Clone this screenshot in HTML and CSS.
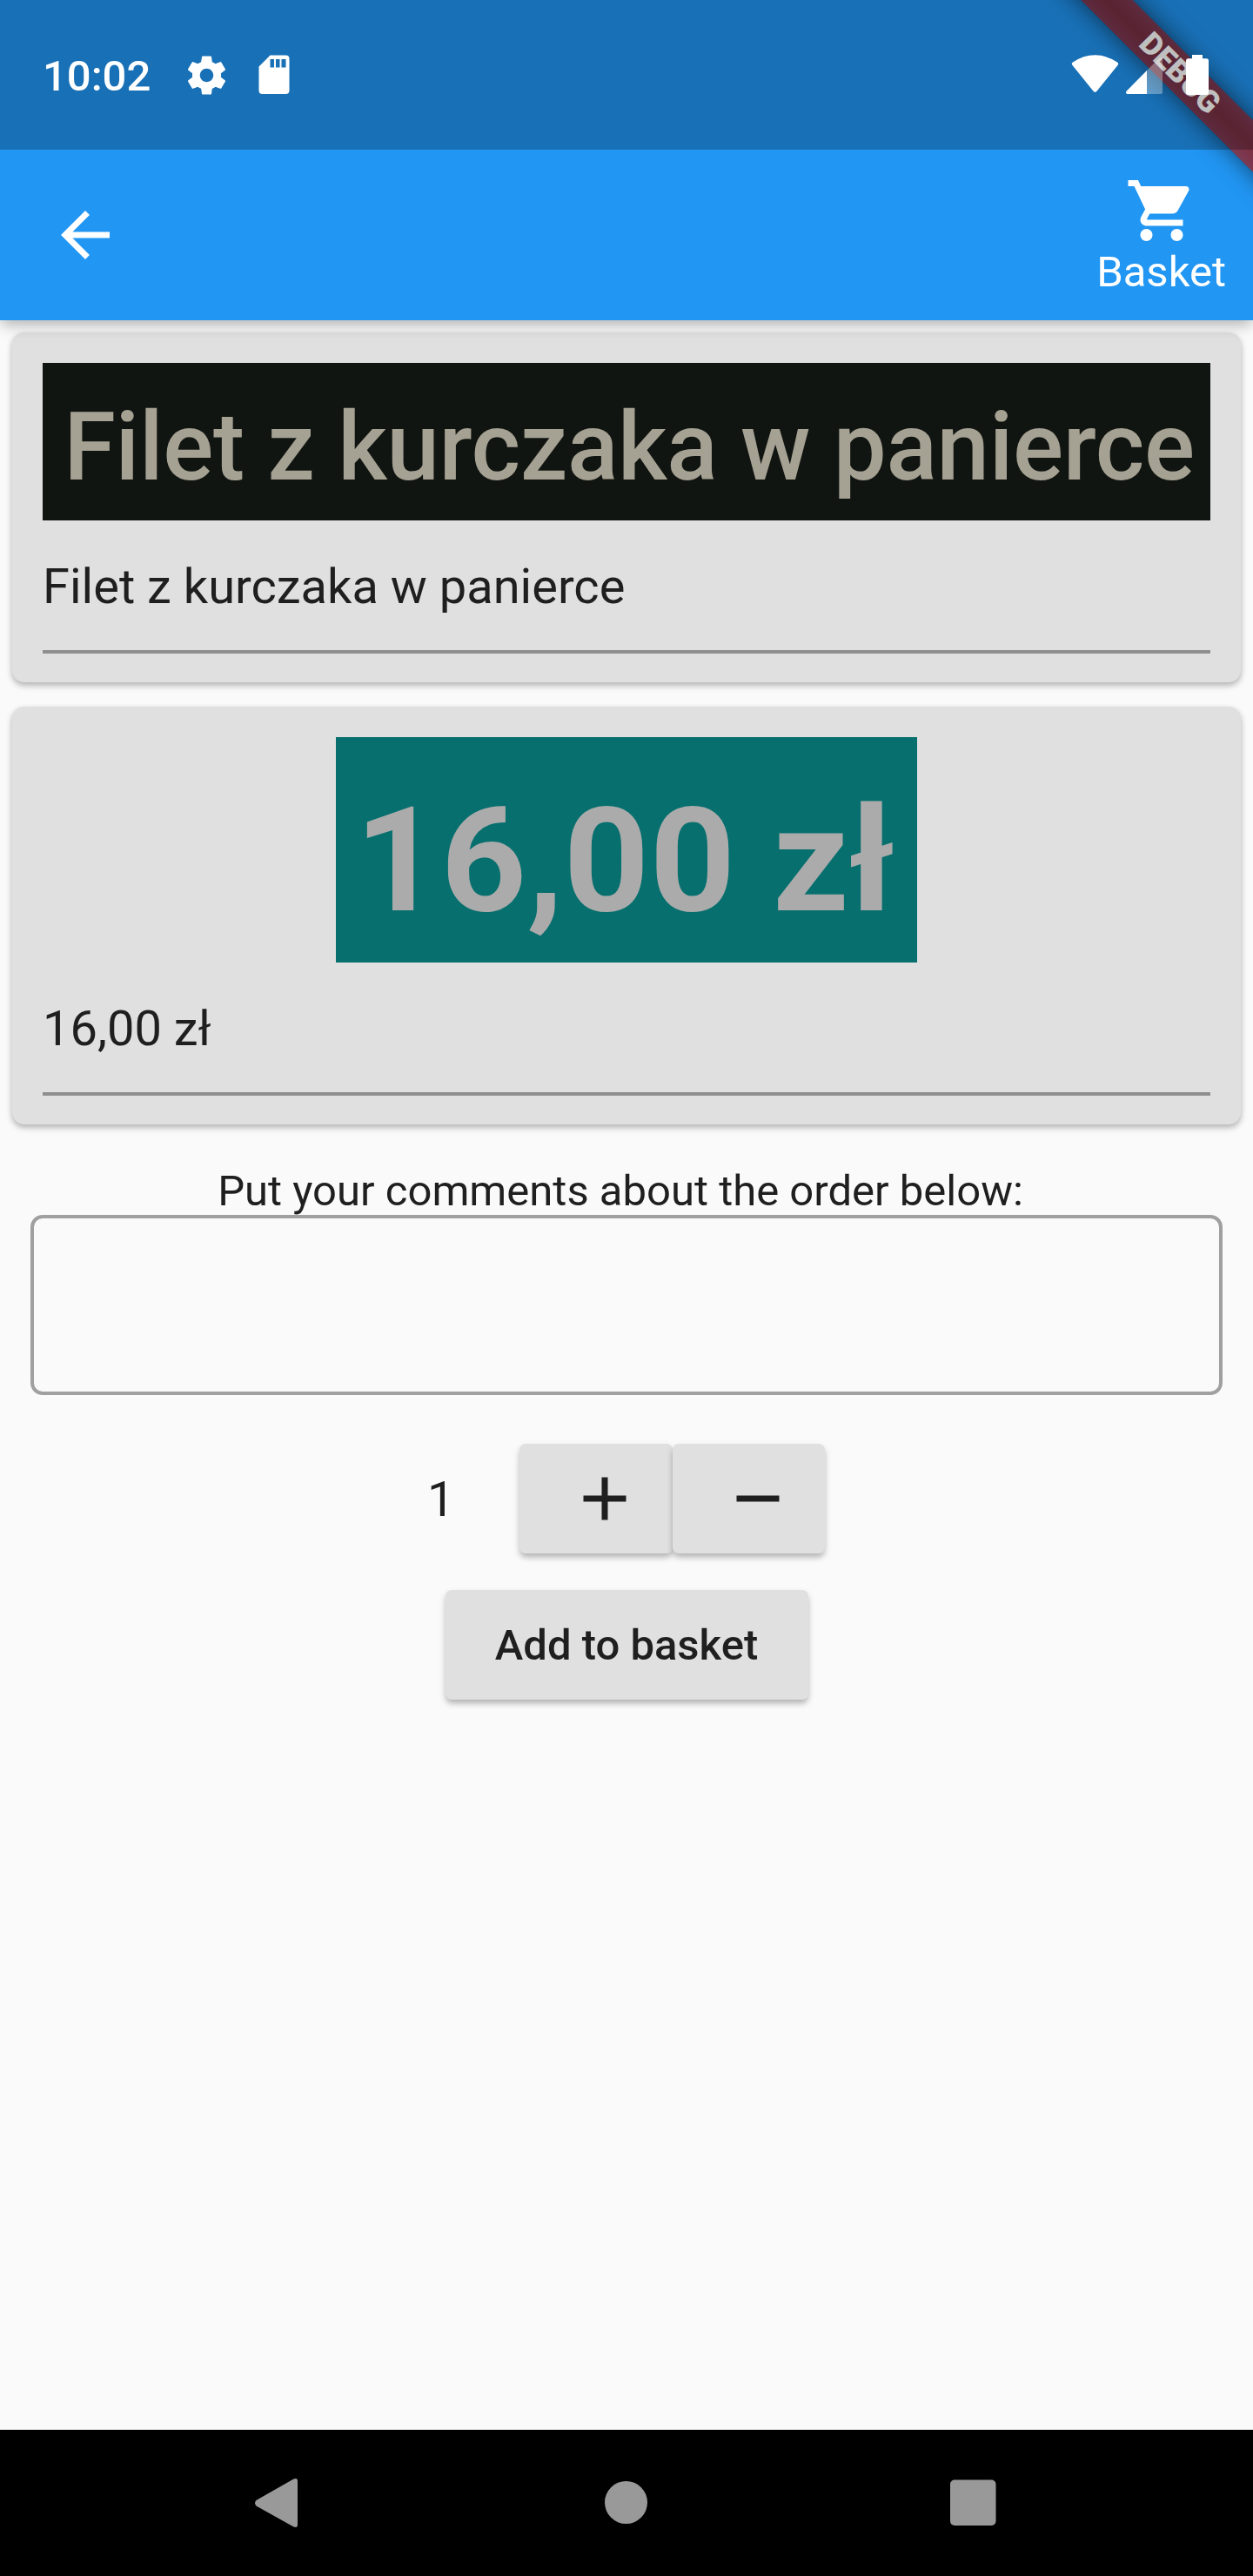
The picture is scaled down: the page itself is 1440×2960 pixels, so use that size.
FILE: index.html
```html
<!DOCTYPE html>
<html lang="en">
<head>
<meta charset="utf-8">
<title>Basket order</title>
<link rel="stylesheet" href="styles.css">
</head>
<body>
<div class="screen">
  <header class="header">
    <div class="ribbon-corner"><div class="ribbon">DEBUG</div></div>
    <div class="status">
      <span class="clock">10:02</span>
      <svg class="gear" viewBox="0 0 24 24"><path d="M19.43 12.98c.04-.32.07-.64.07-.98s-.03-.66-.07-.98l2.11-1.65c.19-.15.24-.42.12-.64l-2-3.46c-.12-.22-.39-.3-.61-.22l-2.49 1c-.52-.4-1.08-.73-1.69-.98l-.38-2.65C14.46 2.18 14.25 2 14 2h-4c-.25 0-.46.18-.49.42l-.38 2.65c-.61.25-1.17.59-1.69.98l-2.49-1c-.23-.09-.49 0-.61.22l-2 3.46c-.13.22-.07.49.12.64l2.11 1.65c-.04.32-.07.65-.07.98s.03.66.07.98l-2.11 1.65c-.19.15-.24.42-.12.64l2 3.46c.12.22.39.3.61.22l2.49-1c.52.4 1.08.73 1.69.98l.38 2.65c.03.24.24.42.49.42h4c.25 0 .46-.18.49-.42l.38-2.65c.61-.25 1.17-.59 1.69-.98l2.49 1c.23.09.49 0 .61-.22l2-3.46c.12-.22.07-.49-.12-.64l-2.11-1.65zM12 15.500c-1.930 0-3.500-1.570-3.500-3.500s1.570-3.500 3.500-3.500 3.500 1.570 3.500 3.500-1.570 3.500-3.500 3.500z"/></svg>
      <svg class="sdcard" viewBox="0 0 36 46"><path fill-rule="evenodd" d="M13.500 .5H31.500Q35.500 .5 35.500 4.500V41Q35.500 45 31.500 45H4.500Q.5 45 .5 41V13.500ZM13.500 5V14.500H18V5ZM20 5V14.500H24.500V5ZM26.500 5V14.500H31.500V5Z"/></svg>
      <span class="spacer"></span>
      <svg class="indicators" viewBox="1230 60 162 52">
        <path d="M1232.500 75Q1230.800 73 1233 71.600Q1245 63.300 1258.500 63.300T1284 71.600Q1286.200 73 1284.500 75L1260.500 104.800Q1258.500 107 1256.500 104.800Z"/>
        <path d="M1318 81V108H1295.500Q1292.800 107 1294.800 104.400Z"/>
        <path opacity=".32" d="M1318 81L1332.500 66.800Q1336 64.500 1336 68V106Q1336 108 1334 108H1318Z"/>
        <path d="M1370 63H1382V67.300H1386.500Q1389 67.300 1389 70V106.500Q1389 109 1386.500 109H1365.500Q1363 109 1363 106.500V70Q1363 67.300 1365.500 67.300H1370Z"/>
      </svg>
    </div>
    <div class="appbar">
      <svg class="icon" viewBox="0 0 24 24"><path d="M20 11H7.830l5.590-5.590L12 4l-8 8 8 8 1.410-1.410L7.830 13H20v-2z"/></svg>
      <div class="basket">
        <svg class="icon" viewBox="0 0 24 24"><path d="M7 18c-1.100 0-1.990.9-1.990 2S5.900 22 7 22s2-.9 2-2-.9-2-2-2zM1 2v2h2l3.600 7.590-1.350 2.450c-.16.28-.25.61-.25.96 0 1.100.9 2 2 2h12v-2H7.420c-.14 0-.25-.11-.25-.25l.03-.12.9-1.630h7.450c.75 0 1.410-.41 1.750-1.030l3.580-6.490c.08-.14.12-.31.12-.48 0-.55-.45-1-1-1H5.210l-.94-2H1zm16 16c-1.100 0-1.990.9-1.990 2s.89 2 1.990 2 2-.9 2-2-.9-2-2-2z"/></svg>
        <span>Basket</span>
      </div>
    </div>
  </header>

  <main class="content">
    <section class="card">
      <div class="snippet snippet-name"><span>Filet z kurczaka w panierce</span></div>
      <div class="field">Filet z kurczaka w panierce</div>
    </section>
    <section class="card card-price">
      <div class="snippet snippet-price"><span>16,00 zł</span></div>
      <div class="field">16,00 zł</div>
    </section>

    <div class="comment-label"><span>Put your comments about the order below:</span></div>
    <div class="comment-box"></div>

    <div class="quantity">
      <span class="count">1</span>
      <div class="button step"><svg class="icon" viewBox="0 0 24 24"><path d="M19 13h-6v6h-2v-6H5v-2h6V5h2v6h6v2z"/></svg></div>
      <div class="button step"><svg class="icon" viewBox="0 0 24 24"><path d="M19 13H5v-2h14v2z"/></svg></div>
    </div>
    <div class="button add"><span>Add to basket</span></div>
  </main>

  <nav class="navbar">
    <svg viewBox="0 0 1440 168">
      <path d="M294.500 87.500Q291.500 84 294.500 81L337 56.800Q342 54.500 342 59V109Q342 113.500 337 111.200Z"/>
      <circle cx="719.500" cy="83.500" r="24.500"/>
      <rect x="1092" y="57.500" width="52.500" height="52.500" rx="5"/>
    </svg>
  </nav>
</div>
</body>
</html>
```
FILE: styles.css
```css
* { box-sizing: border-box; }

body {
  margin: 0;
  font-family: Roboto, sans-serif;
  color: #1f1f1f;
  background: #fafafa;
}

svg { display: block; fill: currentColor; flex: none; }
span { white-space: nowrap; }

.screen {
  width: 1440px;
  height: 2960px;
  display: flex;
  flex-direction: column;
  background: #fafafa;
  overflow: hidden;
}

.header {
  position: relative;
  z-index: 1;
  height: 368px;
  color: #fff;
  background: #2196f3;
  box-shadow: 0 7px 14px -3px rgba(0, 0, 0, .2), 0 6px 20px rgba(0, 0, 0, .12);
}

.ribbon-corner {
  position: absolute;
  top: 0;
  right: 0;
  width: 300px;
  height: 300px;
  overflow: hidden;
}

.ribbon {
  position: absolute;
  left: -34px;
  top: 63px;
  width: 500px;
  height: 42px;
  line-height: 42px;
  text-align: center;
  font-size: 35.700px;
  font-weight: 900;
  background:
    linear-gradient(rgba(183, 28, 28, .627), rgba(183, 28, 28, .627)),
    linear-gradient(rgba(0, 0, 0, .27), rgba(0, 0, 0, .46) 45%, rgba(0, 0, 0, .46) 55%, rgba(0, 0, 0, .27));
  box-shadow: 0 0 28px rgba(0, 0, 0, .55);
  transform: rotate(45deg);
}

.status {
  position: relative;
  height: 172px;
  display: flex;
  align-items: center;
  padding: 0 48px 0 49px;
  background: rgba(0, 0, 0, .25);
}

.clock { font-size: 49px; font-weight: 500; line-height: 58px; padding-top: 3px; }
.gear { width: 53px; height: 53px; margin-left: 38px; }
.sdcard { width: 36px; height: 46px; margin-left: 33px; }
.spacer { flex: 1; }
.indicators { width: 162px; height: 52px; }

.appbar {
  height: 196px;
  display: flex;
  justify-content: space-between;
  align-items: center;
  padding: 0 31px 0 56px;
}

.icon { width: 84px; height: 84px; }

.basket {
  display: flex;
  flex-direction: column;
  align-items: center;
  padding-top: 2px;
  font-size: 49px;
  line-height: 58px;
}

.content {
  flex: 1;
  display: flex;
  flex-direction: column;
  padding: 14px;
}

.card {
  height: 402px;
  padding: 35px;
  margin-bottom: 28px;
  border-radius: 14px;
  background: #e0e0e0;
  box-shadow: 0 3px 6px rgba(0, 0, 0, .2), 0 4px 10px rgba(0, 0, 0, .12);
}

.card-price { height: 480px; margin-bottom: 14px; }

.snippet {
  display: flex;
  justify-content: center;
  align-items: center;
}

.snippet-name {
  height: 181px;
  padding: 12px 0 0 6px;
  font-size: 108.500px;
  font-weight: 500;
  letter-spacing: -.35px;
  color: #a5a193;
  background: #111511;
}

.snippet-price {
  width: 668px;
  height: 259px;
  margin: 0 auto;
  padding: 25px 3px 0 0;
  font-size: 167px;
  font-weight: 700;
  color: #ababab;
  background: #076f6e;
}

/* The price is set slightly wider than the regular bold face. */
.snippet-price span { transform: scaleX(1.031); }

.field {
  height: 153px;
  padding-top: 43px;
  font-size: 56px;
  line-height: 66px;
  border-bottom: 4px solid #8f8f8f;
}

.comment-label {
  padding: 36px 14px 0 0;
  font-size: 49px;
  line-height: 54px;
  text-align: center;
}

.comment-box {
  height: 207px;
  margin: 0 21px;
  border: 4px solid #a0a0a0;
  border-radius: 14px;
}

.quantity {
  display: flex;
  align-items: center;
  margin: 56px 0 42px 477px;
}

.count { width: 106px; padding-top: 2px; font-size: 56px; line-height: 66px; }

.button {
  height: 126px;
  display: flex;
  justify-content: center;
  align-items: center;
  border-radius: 7px;
  background: #e0e0e0;
  box-shadow: 0 5px 6px -1px rgba(0, 0, 0, .2), 0 4px 10px rgba(0, 0, 0, .12);
}

.step { width: 175.500px; padding-left: 21px; }

.add {
  width: 417px;
  align-self: center;
  font-size: 49px;
  font-weight: 500;
}

.navbar { height: 168px; background: #000; color: #999; }
.navbar svg { width: 1440px; height: 168px; }
```
